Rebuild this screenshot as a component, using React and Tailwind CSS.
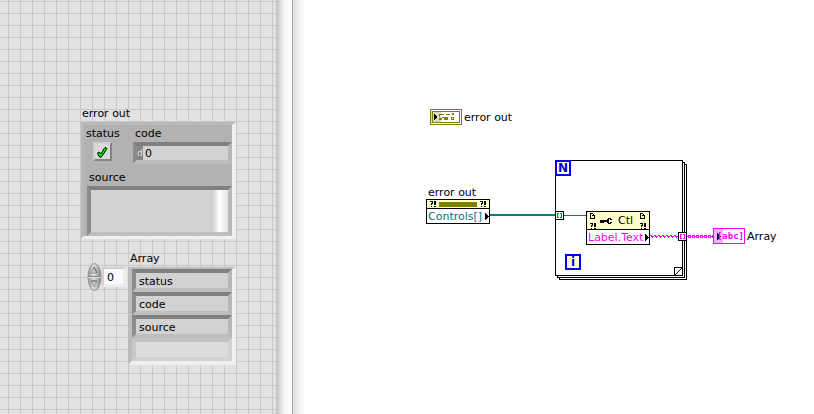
import React from 'react';

const gridLines =
  'bg-[#e2e2e2] bg-[linear-gradient(to_right,#c8c8c8_1px,transparent_1px),linear-gradient(to_bottom,#c8c8c8_1px,transparent_1px)] bg-[size:12px_12px] bg-[position:8px_1px]';
const sunken = 'border-4 border-t-[#808080] border-l-[#8c8c8c] border-r-[#b8b8b8] border-b-[#bebebe]';
const raisedFrame = 'border-4 border-t-[#bcbcbc] border-l-[#bcbcbc] border-r-[#f0f0f0] border-b-[#f0f0f0]';

function CheckMark() {
  return (
    <svg className="block" width="13" height="13" viewBox="0 0 13 13" aria-hidden="true">
      <path d="M1.5 7L3 6L5 8L8 2.5L10 1.5L11 2.5L7.5 8L5 11.5L3 10.5Z" fill="#00f000" stroke="#000" strokeWidth="1" />
    </svg>
  );
}

function ErrorCluster() {
  return (
    <section className="flex flex-col" aria-label="error out">
      <h2 className="pl-px leading-4">error out</h2>
      <div className="w-[155px] border-t-3 border-l-3 border-r-4 border-b-3 border-t-[#b9b9b9] border-l-[#b9b9b9] border-r-[#f0f0f0] border-b-[#f0f0f0] bg-[#b2b2b2]">
        <div className="flex justify-between">
          <div className="flex flex-col pl-0.5 pt-px">
            <span className="leading-4">status</span>
            <button type="button" aria-label="status" className="ml-[7px] size-[19px] border-2 border-t-[#cfcfcf] border-l-[#cfcfcf] border-r-[#838383] border-b-[#838383] bg-[#dadada] pl-px pt-px">
              <CheckMark />
            </button>
          </div>
          <div className="flex flex-col pt-px">
            <label htmlFor="code" className="pl-0.5 leading-4">code</label>
            <div className={`${sunken} flex h-[22px] w-[99px] bg-[#d2d2d2]`}>
              <span className="w-1.5 bg-[#858585] text-[9px] leading-[14px] text-[#e0e0e0]">d</span>
              <input id="code" readOnly defaultValue="0" className="w-0 flex-1 pl-0.5 pt-px leading-[14px] outline-none" />
            </div>
          </div>
        </div>
        <label htmlFor="source" className="mt-1.5 block pl-[5px] leading-4">source</label>
        <div className={`${sunken} ml-[3px] flex h-[50px] bg-[#d2d2d2]`}>
          <textarea id="source" readOnly className="w-0 flex-1 resize-none outline-none" />
          <div className="w-[17px] bg-linear-to-r from-[#c8c8c8] via-white to-[#e4e4e4]" />
        </div>
      </div>
    </section>
  );
}

function Spinner() {
  return (
    <button type="button" aria-label="Change index" className="h-7 w-[15px]">
      <svg className="block" width="15" height="28" viewBox="0 0 15 28">
        <defs>
          <linearGradient id="spin" x1="0" x2="1">
            <stop offset="0" stopColor="#8c8c8c" />
            <stop offset="0.4" stopColor="#dedede" />
            <stop offset="0.7" stopColor="#bcbcbc" />
            <stop offset="1" stopColor="#777777" />
          </linearGradient>
        </defs>
        <ellipse cx="7.5" cy="14" rx="6.5" ry="13.5" fill="url(#spin)" stroke="#949494" strokeWidth="1" />
        <path d="M1 13.5H14" stroke="#858585" />
        <path d="M1 14.5H14" stroke="#dedede" />
        <path d="M7 4L10 10H4Z" fill="#cacaca" stroke="#999" />
        <path d="M4 18H10L7 24Z" fill="#cacaca" stroke="#999" />
        <path d="M7 4L10 10M4 18H10" stroke="#6a6a6a" fill="none" />
      </svg>
    </button>
  );
}

function ArrayControl() {
  return (
    <section className="flex items-start" aria-label="Array">
      <div className="flex items-start pt-3">
        <Spinner />
        <input aria-label="index" readOnly defaultValue="0" className="mt-1 h-5 w-[25px] border-t-2 border-l-2 border-r-4 border-b-3 border-t-[#d0d0d0] border-l-[#d0d0d0] border-r-[#ededed] border-b-[#ededed] bg-[#fafafa] pl-[3px] pt-px leading-[14px] outline-none" />
      </div>
      <div className="ml-px w-[108px]">
        <h2 className="pl-0.5 leading-4">Array</h2>
        <ul className={`${raisedFrame} border-t-2`}>
          {['status', 'code', 'source'].map((name) => (
            <li key={name} className={`${sunken} h-[23px] bg-[#d2d2d2] pl-[3px] leading-[18px]`}>{name}</li>
          ))}
          <li className="h-[23px] border-4 border-t-[#c2c2c2] border-l-[#c8c8c8] border-r-[#d2d2d2] border-b-[#d2d2d2] bg-[#dcdcdc]" />
        </ul>
      </div>
    </section>
  );
}

function Query() {
  return (
    <svg className="block" width="6" height="6" viewBox="0 0 6 6" shapeRendering="crispEdges" aria-hidden="true">
      <path d="M0 0h3v1h-3zM2 1h1v1h-1zM1 2h2v1h-2zM1 3h1v1h-1zM1 5h1v1h-1zM4 0h2v4h-2zM4 5h2v1h-2z" fill="#000" />
    </svg>
  );
}

function Page() {
  return (
    <svg className="block" width="6" height="6" viewBox="0 0 6 6" shapeRendering="crispEdges" aria-hidden="true">
      <path d="M0 0h3v1h-3zM0 0h1v6h-1zM0 5h5v1h-5zM4 2h1v4h-1zM3 1h1v2h-1zM2 2h2v1h-2z" fill="#000" />
    </svg>
  );
}

function Arrow() {
  return (
    <svg className="block" width="4" height="7" viewBox="0 0 4 7" shapeRendering="crispEdges" aria-hidden="true">
      <path d="M0 0h1v7h-1zM1 1h1v5h-1zM2 2h1v3h-1zM3 3h1v1h-1z" fill="#000" />
    </svg>
  );
}

function Tunnel({ place, color }) {
  return (
    <div className={`absolute size-[9px] border border-black bg-[#ffffcc] ${place}`}>
      <svg className="block" width="7" height="7" viewBox="0 0 7 7" shapeRendering="crispEdges">
        <path d="M1 1h2v1h-1v3h1v1h-2zM4 1h2v5h-2v-1h1v-3h-1z" fill={color} />
      </svg>
    </div>
  );
}

const waveSteps = Array.from({ length: 7 }, (_, i) => 357 + i * 4);
const beads = Array.from({ length: 7 }, (_, i) => 394 + i * 4);

function BlockDiagram() {
  return (
    <section className="relative min-w-0 flex-1 overflow-hidden bg-white bg-[linear-gradient(to_right,#dcdcdc,#f4f4f4_7px,#fff_13px)]" aria-label="Block diagram">
      <svg className="absolute left-0 top-0" width="521" height="414" viewBox="0 0 521 414" aria-hidden="true">
        <g fill="#fff" stroke="#000" shapeRendering="crispEdges">
          <rect x="266.5" y="164.5" width="127" height="115" />
          <rect x="264.5" y="162.5" width="127" height="115" />
          <rect x="262.5" y="160.5" width="127" height="115" />
          <path d="M381.5 275V267.5H389" />
        </g>
        <path d="M381.5 275.5L389.5 267.5" stroke="#000" />
        <path d="M197 215H262" stroke="#008080" strokeWidth="2" />
        <path d="M271 215.5H293" stroke="#008080" />
        <g fill="#ff00ff" shapeRendering="crispEdges">
          {waveSteps.map((x) => (
            <path key={x} d={`M${x} 235h2v1h-2zM${x + 1} 236h3v1h-3zM${x + 2} 237h1v1h-1z`} />
          ))}
        </g>
        <g fill="#ff00ff" shapeRendering="crispEdges">
          {beads.map((x) => (
            <path key={x} d={`M${x + 1} 235h3v1h-3zM${x} 236h2v1h-2zM${x + 3} 236h1v1h-1zM${x + 1} 237h3v1h-3z`} />
          ))}
        </g>
      </svg>

      <div className="absolute left-[137px] top-[109px] flex items-start gap-0.5">
        <svg width="32" height="16" viewBox="0 0 32 16" shapeRendering="crispEdges" aria-hidden="true">
          <rect x="0.5" y="0.5" width="31" height="15" fill="#fff" stroke="#808000" />
          <rect x="2.5" y="2.5" width="27" height="11" fill="#fff" stroke="#808000" />
          <rect x="1" y="2" width="10" height="12" fill="#808000" fillOpacity="0.3" />
          <path d="M4 5h1v6h-1zM5 6h1v4h-1zM6 7h1v2h-1z" fill="#000" />
          <path d="M9 5h5v1h-4v2h-1zM16 5h4v1h-4zM22 4h2v2h-2zM9 9h3v2h-3zM14 8h4v3h-4zM12 8h2v1h-2zM21 8h3v3h-3z" fill="#808000" />
          <rect x="22" y="9" width="1" height="1" fill="#fff" />
        </svg>
        <span className="pt-px leading-4">error out</span>
      </div>

      <div className="absolute left-[133px] top-[185px]">
        <div className="h-3.5 pl-0.5 leading-4">error out</div>
        <div className="h-[25px] w-16 border border-black">
          <div className="flex h-[9px] items-center justify-between border-b border-black bg-[#ffffcc] px-[3px]">
            <Query />
            <span className="h-[5px] w-[38px] bg-[#808000]" />
            <Query />
          </div>
          <div className="flex h-3.5 items-center justify-between bg-white pl-px leading-[14px] text-[#007878]">
            <span className="pt-px">Controls[]</span>
            <Arrow />
          </div>
        </div>
      </div>

      <div className="absolute left-[262px] top-[160px] size-4 border-2 border-[#0000ff] bg-[#ffffcc] text-center text-[12px] leading-3 font-bold text-[#0000e0]">N</div>
      <div className="absolute left-[272px] top-[254px] size-4 border-2 border-[#0000ff] bg-[#ffffcc] text-center text-[12px] leading-3 font-bold text-[#0000e0]">i</div>

      <div className="absolute left-[293px] top-[211px] h-[34px] w-16 border border-black bg-white">
        <div className="flex h-[18px] items-center border-b border-black bg-[#ffffcc] px-[3px]">
          <span className="flex flex-col gap-1"><Page /><Query /></span>
          <svg className="ml-1" width="12" height="8" viewBox="0 0 12 8" shapeRendering="crispEdges" aria-hidden="true">
            <path d="M0 3h4v3h-4zM4 3h3v2h-3zM7 2h2v4h-2zM8 1h3v1h-3zM8 6h3v1h-3zM10 2h2v1h-2zM10 5h2v1h-2z" fill="#000" />
          </svg>
          <span className="ml-1.5 pt-px leading-4">Ctl</span>
          <span className="ml-auto flex flex-col gap-1"><Page /><Query /></span>
        </div>
        <div className="flex h-3.5 items-center justify-between pl-px leading-[14px] text-[#ff00ff]">
          <span className="pt-px">Label.Text</span>
          <Arrow />
        </div>
      </div>

      <Tunnel place="left-[262px] top-[211px]" color="#008080" />
      <Tunnel place="left-[385px] top-[232px]" color="#ff00ff" />

      <div className="absolute left-[420px] top-[228px] flex items-start gap-0.5">
        <div className="flex h-4 w-8 items-center border border-[#ff00ff] bg-[linear-gradient(to_right,#ffb0ff_9px,#fff_9px)] pl-[3px]">
          <Arrow />
          <span className="-ml-1 font-['DejaVu_Sans_Mono','Liberation_Mono',monospace] text-[9px] leading-3 font-bold text-[#ff00ff]">[abc]</span>
        </div>
        <span className="pt-px leading-4">Array</span>
      </div>
    </section>
  );
}

export default function App() {
  return (
    <main className="flex min-h-screen w-full font-['DejaVu_Sans',Verdana,sans-serif] text-[11px] text-black">
      <section className={`${gridLines} flex w-[276px] shrink-0 flex-col pt-[106px]`} aria-label="Front panel">
        <div className="pl-[81px]">
          <ErrorCluster />
        </div>
        <div className="mt-3 pl-[87px]">
          <ArrayControl />
        </div>
      </section>
      <div className="w-[17px] shrink-0 border-r border-[#a8a8a8] bg-linear-to-r from-[#c2c2c2] via-[#f2f2f2] to-white" />
      <BlockDiagram />
    </main>
  );
}
